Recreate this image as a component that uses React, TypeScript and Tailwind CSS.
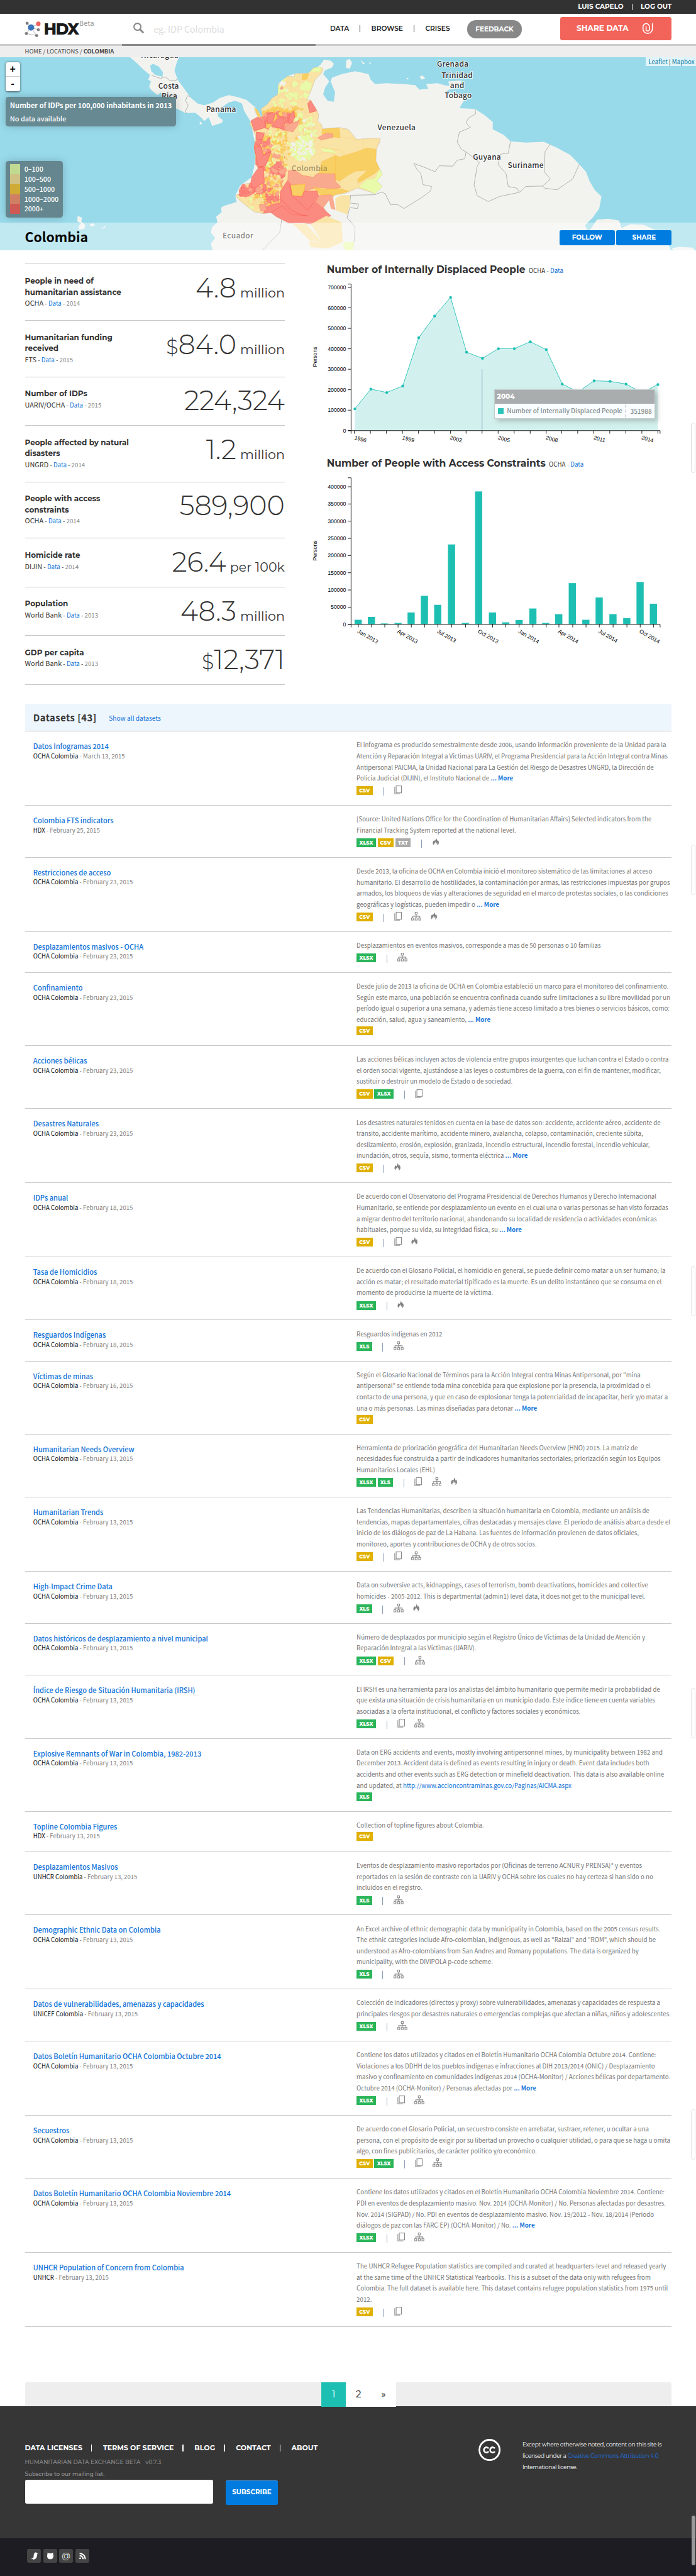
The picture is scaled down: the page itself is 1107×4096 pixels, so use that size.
import type { ReactNode } from 'react';

type Row = { t: string; o?: string; d: string; l: string[]; more?: boolean; link?: string; f: string[]; i?: string };

const ROWS: Row[] = [
  { t: 'Datos Infogramas 2014', d: 'March 13, 2015', l: ['El infograma es producido semestralmente desde 2006, usando información proveniente de la Unidad para la', 'Atención y Reparación Integral a Victimas UARIV, el Programa Presidencial para la Acción Integral contra Minas', 'Antipersonal PAICMA, la Unidad Nacional para La Gestión del Riesgo de Desastres UNGRD, la Dirección de', 'Policía Judicial (DIJIN), el Instituto Nacional de'], more: true, f: ['CSV'], i: 'c' },
  { t: 'Colombia FTS indicators', o: 'HDX', d: 'February 25, 2015', l: ['[Source: United Nations Office for the Coordination of Humanitarian Affairs] Selected indicators from the', 'Financial Tracking System reported at the national level.'], f: ['XLSX', 'CSV', 'TXT'], i: 'f' },
  { t: 'Restricciones de acceso', d: 'February 23, 2015', l: ['Desde 2013, la oficina de OCHA en Colombia inició el monitoreo sistemático de las limitaciones al acceso', 'humanitario. El desarrollo de hostilidades, la contaminación por armas, las restricciones impuestas por grupos', 'armados, los bloqueos de vías y alteraciones de seguridad en el marco de protestas sociales, o las condiciones', 'geográficas y logísticas, pueden impedir o'], more: true, f: ['CSV'], i: 'cof' },
  { t: 'Desplazamientos masivos - OCHA', d: 'February 23, 2015', l: ['Desplazamientos en eventos masivos, corresponde a mas de 50 personas o 10 familias'], f: ['XLSX'], i: 'o' },
  { t: 'Confinamiento', d: 'February 23, 2015', l: ['Desde julio de 2013 la oficina de OCHA en Colombia estableció un marco para el monitoreo del confinamiento.', 'Según este marco, una población se encuentra confinada cuando sufre limitaciones a su libre movilidad por un', 'período igual o superior a una semana, y además tiene acceso limitado a tres bienes o servicios básicos, como:', 'educación, salud, agua y saneamiento,'], more: true, f: ['CSV'] },
  { t: 'Acciones bélicas', d: 'February 23, 2015', l: ['Las acciones bélicas incluyen actos de violencia entre grupos insurgentes que luchan contra el Estado o contra', 'el orden social vigente, ajustándose a las leyes o costumbres de la guerra, con el fin de mantener, modificar,', 'sustituir o destruir un modelo de Estado o de sociedad.'], f: ['CSV', 'XLSX'], i: 'c' },
  { t: 'Desastres Naturales', d: 'February 23, 2015', l: ['Los desastres naturales tenidos en cuenta en la base de datos son: accidente, accidente aéreo, accidente de', 'transito, accidente marítimo, accidente minero, avalancha, colapso, contaminación, creciente súbita,', 'deslizamiento, erosión, explosión, granizada, incendio estructural, incendio forestal, incendio vehicular,', 'inundación, otros, sequía, sismo, tormenta eléctrica'], more: true, f: ['CSV'], i: 'f' },
  { t: 'IDPs anual', d: 'February 18, 2015', l: ['De acuerdo con el Observatorio del Programa Presidencial de Derechos Humanos y Derecho Internacional', 'Humanitario, se entiende por desplazamiento un evento en el cual una o varias personas se han visto forzadas', 'a migrar dentro del territorio nacional, abandonando su localidad de residencia o actividades económicas', 'habituales, porque su vida, su integridad física, su'], more: true, f: ['CSV'], i: 'cf' },
  { t: 'Tasa de Homicidios', d: 'February 18, 2015', l: ['De acuerdo con el Glosario Policial, el homicidio en general, se puede definir como matar a un ser humano; la', 'acción es matar; el resultado material tipificado es la muerte. Es un delito instantáneo que se consuma en el', 'momento de producirse la muerte de la víctima.'], f: ['XLSX'], i: 'f' },
  { t: 'Resguardos Indígenas', d: 'February 18, 2015', l: ['Resguardos indígenas en 2012'], f: ['XLS'], i: 'o' },
  { t: 'Víctimas de minas', d: 'February 16, 2015', l: ['Según el Glosario Nacional de Términos para la Acción Integral contra Minas Antipersonal, por "mina', 'antipersonal" se entiende toda mina concebida para que explosione por la presencia, la proximidad o el', 'contacto de una persona, y que en caso de explosionar tenga la potencialidad de incapacitar, herir y/o matar a', 'una o más personas. Las minas diseñadas para detonar'], more: true, f: ['CSV'] },
  { t: 'Humanitarian Needs Overview', d: 'February 13, 2015', l: ['Herramienta de priorización geográfica del Humanitarian Needs Overview (HNO) 2015. La matriz de', 'necesidades fue construida a partir de indicadores humanitarios sectoriales; priorización según los Equipos', 'Humanitarios Locales (EHL)'], f: ['XLSX', 'XLS'], i: 'cof' },
  { t: 'Humanitarian Trends', d: 'February 13, 2015', l: ['Las Tendencias Humanitarias, describen la situación humanitaria en Colombia, mediante un análisis de', 'tendencias, mapas departamentales, cifras destacadas y mensajes clave. El periodo de análisis abarca desde el', 'inicio de los diálogos de paz de La Habana. Las fuentes de información provienen de datos oficiales,', 'monitoreo, aportes y contribuciones de OCHA y de otros socios.'], f: ['CSV'], i: 'co' },
  { t: 'High-Impact Crime Data', d: 'February 13, 2015', l: ['Data on subversive acts, kidnappings, cases of terrorism, bomb deactivations, homicides and collective', 'homicides - 2005-2012. This is departmental (admin1) level data, it does not get to the municipal level.'], f: ['XLS'], i: 'of' },
  { t: 'Datos históricos de desplazamiento a nivel municipal', d: 'February 13, 2015', l: ['Número de desplazados por municipio según el Registro Único de Víctimas de la Unidad de Atención y', 'Reparación Integral a las Víctimas (UARIV).'], f: ['XLSX', 'CSV'], i: 'o' },
  { t: 'Índice de Riesgo de Situación Humanitaria (IRSH)', d: 'February 13, 2015', l: ['El IRSH es una herramienta para los analistas del ámbito humanitario que permite medir la probabilidad de', 'que exista una situación de crisis humanitaria en un municipio dado. Este índice tiene en cuenta variables', 'asociadas a la oferta institucional, el conflicto y factores sociales y económicos.'], f: ['XLSX'], i: 'co' },
  { t: 'Explosive Remnants of War in Colombia, 1982-2013', d: 'February 13, 2015', l: ['Data on ERG accidents and events, mostly involving antipersonnel mines, by municipality between 1982 and', 'December 2013. Accident data is defined as events resulting in injury or death. Event data includes both', 'accidents and other events such as ERG detection or minefield deactivation. This data is also available online', 'and updated, at'], link: 'http://www.accioncontraminas.gov.co/Paginas/AICMA.aspx', f: ['XLS'] },
  { t: 'Topline Colombia Figures', o: 'HDX', d: 'February 13, 2015', l: ['Collection of topline figures about Colombia.'], f: ['CSV'] },
  { t: 'Desplazamientos Masivos', o: 'UNHCR Colombia', d: 'February 13, 2015', l: ['Eventos de desplazamiento masivo reportados por (Oficinas de terreno ACNUR y PRENSA)* y eventos', 'reportados en la sesión de contraste con la UARIV y OCHA sobre los cuales no hay certeza si han sido o no', 'incluidos en el registro.'], f: ['XLS'], i: 'o' },
  { t: 'Demographic Ethnic Data on Colombia', d: 'February 13, 2015', l: ['An Excel archive of ethnic demographic data by municipality in Colombia, based on the 2005 census results.', 'The ethnic categories include Afro-colombian, indigenous, as well as "Raizal" and "ROM", which should be', 'understood as Afro-colombians from San Andres and Romany populations. The data is organized by', 'municipality, with the DIVIPOLA p-code scheme.'], f: ['XLS'], i: 'o' },
  { t: 'Datos de vulnerabilidades, amenazas y capacidades', o: 'UNICEF Colombia', d: 'February 13, 2015', l: ['Colección de indicadores (directos y proxy) sobre vulnerabilidades, amenazas y capacidades de respuesta a', 'principales riesgos por desastres naturales o emergencias complejas que afectan a niñas, niños y adolescentes.'], f: ['XLSX'], i: 'o' },
  { t: 'Datos Boletín Humanitario OCHA Colombia Octubre 2014', d: 'February 13, 2015', l: ['Contiene los datos utilizados y citados en el Boletín Humanitario OCHA Colombia Octubre 2014. Contiene:', 'Violaciones a los DDHH de los pueblos indígenas e infracciones al DIH 2013/2014 (ONIC) / Desplazamiento', 'masivo y confinamiento en comunidades indígenas 2014 (OCHA-Monitor) / Acciones bélicas por departamento.', 'Octubre 2014 (OCHA-Monitor) / Personas afectadas por'], more: true, f: ['XLSX'], i: 'co' },
  { t: 'Secuestros', d: 'February 13, 2015', l: ['De acuerdo con el Glosario Policial, un secuestro consiste en arrebatar, sustraer, retener, u ocultar a una', 'persona, con el propósito de exigir por su libertad un provecho o cualquier utilidad, o para que se haga u omita', 'algo, con fines publicitarios, de carácter político y/o económico.'], f: ['CSV', 'XLSX'], i: 'co' },
  { t: 'Datos Boletín Humanitario OCHA Colombia Noviembre 2014', d: 'February 13, 2015', l: ['Contiene los datos utilizados y citados en el Boletín Humanitario OCHA Colombia Noviembre 2014. Contiene:', 'PDI en eventos de desplazamiento masivo. Nov. 2014 (OCHA-Monitor) / No. Personas afectadas por desastres.', 'Nov. 2014 (SIGPAD) / No. PDI en eventos de desplazamiento masivo. Nov. 19/2012 - Nov. 18/2014 (Periodo', 'diálogos de paz con las FARC-EP) (OCHA-Monitor) / No.'], more: true, f: ['XLSX'], i: 'co' },
  { t: 'UNHCR Population of Concern from Colombia', o: 'UNHCR', d: 'February 13, 2015', l: ['The UNHCR Refugee Population statistics are compiled and curated at headquarters-level and released yearly', 'at the same time of the UNHCR Statistical Yearbooks. This is a subset of the data only with refugees from', 'Colombia. The full dataset is available here. This dataset contains refugee population statistics from 1975 until', '2012.'], f: ['CSV'], i: 'c' },
];

const TAG: Record<string, string> = {
  CSV: 'w-[29px] bg-[#e0b000]',
  XLSX: 'w-[35px] bg-[#2bb55b]',
  XLS: 'w-[28px] bg-[#2bb55b]',
  TXT: 'w-[28px] bg-[#aaaaaa]',
};

function CopyIcon() {
  return (
    <svg width="14" height="16" viewBox="0 0 14 16" fill="none" stroke="#888">
      <rect x="3.5" y="0.7" width="9.6" height="12.6" strokeWidth="1.2" />
      <path d="M0.9 2.6V15H10.6" strokeWidth="1.3" stroke="#999" />
    </svg>
  );
}
function OrgIcon() {
  return (
    <svg width="18" height="16" viewBox="0 0 18 16" fill="none" stroke="#888" strokeWidth="1.2">
      <rect x="7.1" y="0.6" width="3.8" height="3.6" />
      <path d="M9 4.2V11M2.5 11V7.8H15.5V11" />
      <rect x="0.7" y="11" width="3.6" height="3.8" />
      <rect x="7.1" y="11" width="3.8" height="3.8" />
      <rect x="13.7" y="11" width="3.6" height="3.8" />
    </svg>
  );
}
function FlameIcon() {
  return (
    <svg width="12" height="15" viewBox="0 0 12 15" fill="#808080">
      <path d="M5.6 0.6c1 2-.2 3.6-1.8 5.6C3.2 5.8 3 5.2 2.9 4.4 1.3 6 0.4 8 0.5 9.8c.1 1.7.9 3 2.2 4-.5-1.6-.1-2.7 1.1-4.3.3.6.7.9 1.1 1 .2-1.6.1-2.7-.3-3.7 1.7.9 2.5 2.4 2.5 4.3.6-.4.9-1.1 1-1.9.8 1.4.8 3-.1 4.6C10.2 12.9 11.4 11.1 11.3 8.9c-.1-2-.9-3.500-1.500-5.100-.2 1.200-.6 1.900-1.300 2.500C8.4 3.9 7.600 1.900 5.600 0.600z" />
    </svg>
  );
}

const ICON: Record<string, () => ReactNode> = { c: CopyIcon, o: OrgIcon, f: FlameIcon };

function DatasetRow({ r }: { r: Row }) {
  return (
    <div className="flex border-b border-[#c8c8c8] pb-[18px] pt-[15px]">
      <div className="w-[600px] shrink-0 pl-[15px] pt-[2px]">
        <div className="h-[19px] text-[12.56px] font-medium leading-[20px] text-[#1173d8]">{r.t}</div>
        <div className="h-[18px] text-[10.95px] leading-[18px] text-[#808080]">
          <span className="text-[#111]">{r.o ?? 'OCHA Colombia'}</span> - {r.d}
        </div>
      </div>
      <div>
        <div className="whitespace-nowrap text-[11.06px] leading-[20px] text-[#757575]">
          {r.l.map((x, k) => (
            <div key={x} className="h-[20px]">
              {x}
              {k === r.l.length - 1 && r.more && <span className="font-bold text-[#1173d8]"> ... More</span>}
              {k === r.l.length - 1 && r.link && <span className="text-[#1173d8]"> {r.link}</span>}
            </div>
          ))}
        </div>
        <div className={r.i ? 'mt-[4px] flex h-[16px]' : 'mt-[2px] flex h-[16px]'}>
          <div className="flex gap-[3px]">
            {r.f.map((x) => (
              <span key={x} className={`${TAG[x]} block h-[16px] text-center font-['Montserrat','Inter',sans-serif] text-[9.2px] font-extrabold leading-[16px] text-white`}>{x}</span>
            ))}
          </div>
          {r.i && (
            <>
              <span className="ml-[19px] mr-[19px] mt-[2px] h-[15px] w-px bg-[#8d9fb8]" />
              <div className="-mt-px flex gap-[17px]">
                {r.i.split('').map((x) => {
                  const I = ICON[x];
                  return <I key={x} />;
                })}
              </div>
            </>
          )}
        </div>
      </div>
    </div>
  );
}

const STATS: { l: string[]; s: string; y: string; n: string; u?: string; p?: boolean }[] = [
  { l: ['People in need of', 'humanitarian assistance'], s: 'OCHA', y: '2014', n: '4.8', u: 'million' },
  { l: ['Humanitarian funding', 'received'], s: 'FTS', y: '2015', n: '84.0', u: 'million', p: true },
  { l: ['Number of IDPs'], s: 'UARIV/OCHA', y: '2015', n: '224,324' },
  { l: ['People affected by natural', 'disasters'], s: 'UNGRD', y: '2014', n: '1.2', u: 'million' },
  { l: ['People with access', 'constraints'], s: 'OCHA', y: '2014', n: '589,900' },
  { l: ['Homicide rate'], s: 'DIJIN', y: '2014', n: '26.4', u: 'per 100k' },
  { l: ['Population'], s: 'World Bank', y: '2013', n: '48.3', u: 'million' },
  { l: ['GDP per capita'], s: 'World Bank', y: '2013', n: '12,371', p: true },
];

function Stats() {
  return (
    <div className="w-[470px] shrink-0 border-t border-[#c8c8c8]">
      {STATS.map((s) => (
        <div key={s.n} className={`flex justify-between border-b border-[#c8c8c8] pt-[20px] ${s.l.length > 1 ? 'h-[102px]' : 'h-[88px]'}`}>
          <div className="text-[#333]">
            {s.l.map((x) => (
              <div key={x} className="whitespace-nowrap font-['Montserrat','Inter',sans-serif] text-[13.6px] font-bold leading-[20px]">{x}</div>
            ))}
            <div className="text-[11.06px] leading-[20px]">
              <span className="text-[12.4px]">{s.s}</span> - <span className="text-[#1173d8]">Data</span> - <span className="text-[#888]">{s.y}</span>
            </div>
          </div>
          <div className="-mt-px flex items-baseline whitespace-nowrap font-['Montserrat','Inter',sans-serif] font-light text-[#333]">
            {s.p && <span className="text-[36px] leading-[48px]">$</span>}
            <span className="text-[48.8px] leading-[48px]">{s.n}</span>
            {s.u && <span className="ml-[7px] text-[23.4px] font-normal leading-[48px]">{s.u}</span>}
          </div>
        </div>
      ))}
    </div>
  );
}

const IDP = [549, 479, 491, 468, 297, 220, 154, 348, 370, 335.5, 335.5, 311, 339, 461, 489, 449.5, 451.5, 461, 492, 463];
const BX = [198, 252, 304, 360, 413, 467, 521, 577, 633, 687, 743, 797, 851, 907, 959, 1012, 1067, 1122, 1176, 1232, 1288, 1342, 1396];
const BY = [1298, 1288, 1311, 1309, 1272, 1213, 1245, 1031, 1309, 843, 1272, 1307, 1299, 1258, 1309, 1278, 1168, 1298, 1219, 1278, 1292, 1164, 1241];
const MONTHS: [number, string][] = [[0, 'Jan 2013'], [3, 'Apr 2013'], [6, 'Jul 2013'], [9, 'Oct 2013'], [12, 'Jan 2014'], [15, 'Apr 2014'], [18, 'Jul 2014'], [21, 'Oct 2014']];

function ChartTitle({ children }: { children: string }) {
  return (
    <div className="flex h-[24px] items-baseline whitespace-nowrap">
      <span className="font-['Montserrat','Inter',sans-serif] text-[17.74px] font-bold leading-[24px] text-[#333]">{children}</span>
      <span className="ml-[6px] text-[11.06px] text-[#888]"><span className="text-[#333]">OCHA</span> - <span className="text-[#1173d8]">Data</span></span>
    </div>
  );
}

function Charts() {
  const pts = IDP.map((y, i) => [82.4 + i * 28.85, y / 1.96 - 40] as const);
  const line = pts.map((p) => p.join(',')).join(' ');
  const bx = (x: number) => x / 2.243;
  const by = (y: number) => y / 1.96 - 391;
  return (
    <div className="relative w-[660px] shrink-0">
      <div className="pl-[31px]"><ChartTitle>Number of Internally Displaced People</ChartTitle></div>
      <svg className="block" width="660" height="311" viewBox="0 0 660 311" fontFamily="Liberation Sans, sans-serif" fontSize="10">
        <polygon points={`82.4,279.4 ${line} 630.5,279.4`} fill="#d2f1ee" />
        <polyline points={line} fill="none" stroke="#1ebfb3" strokeWidth="1" />
        {pts.map((p, i) => <circle key={i} cx={p[0]} cy={p[1]} r="2.5" fill="#1ebfb3" />)}
        <path d="M312.5 168.5V279" stroke="#8ab" strokeWidth="1" />
        <path d="M69.5 14.5H75.5V279.5H634.5V285M69.5 279.5H75.5V285" fill="none" stroke="#000" />
        {[0, 1, 2, 3, 4, 5, 6, 7].map((k) => (
          <g key={k}>
            <path d={`M69.5 ${279.5 - k * 37}h6`} stroke="#000" />
            <text x="66.5" y={283 - k * 37} textAnchor="end">{k * 100000}</text>
          </g>
        ))}
        {pts.map((p, i) => <path key={i} d={`M${Math.round(p[0]) - 0.5} 279.5v5.5`} stroke="#000" />)}
        {[0, 3, 6, 9, 12, 15, 18].map((k) => (
          <text key={k} transform={`translate(${pts[k][0] - 1.5} 295) rotate(15)`}>{1996 + k}</text>
        ))}
        <text transform="translate(14 146) rotate(-90)" textAnchor="middle">Persons</text>
      </svg>
      <div className="absolute left-[334px] top-[229px] h-[53px] w-[291px] border border-[#c4cccc] bg-[#f9fdff] shadow-[5px_5px_8px_rgba(119,119,119,0.4)]">
        <div className="h-[25px] bg-[#aaadae] pl-[4px] font-['Montserrat','Inter',sans-serif] text-[12px] font-extrabold leading-[25px] text-white">2004</div>
        <div className="flex h-[26px] items-center text-[11.4px] text-[#868c8c]">
          <span className="ml-[6px] mr-[6px] h-[10px] w-[10px] bg-[#2cc3b7]" />
          <span className="w-[216px] whitespace-nowrap border-r border-dotted border-[#888] font-medium leading-[26px]">Number of Internally Displaced People</span>
          <span className="ml-[7px] font-medium">351988</span>
        </div>
      </div>
      <div className="mt-[16px] pl-[31px]"><ChartTitle>Number of People with Access Constraints</ChartTitle></div>
      <svg className="block" width="660" height="330" viewBox="0 0 660 330" fontFamily="Liberation Sans, sans-serif" fontSize="10">
        {BX.map((x, i) => (
          <g key={x}>
            <rect x={bx(x) - 6.5} y={by(BY[i])} width="13" height={279.5 - by(BY[i])} fill="#1ebfb3" />
            <path d={`M${Math.round(bx(x)) + 0.5} 279.5v5.5`} stroke="#000" />
          </g>
        ))}
        <path d="M69.5 14.5H75.5V279.5H634.5V285M69.5 279.5H75.5V285" fill="none" stroke="#000" />
        {[0, 1, 2, 3, 4, 5, 6, 7, 8].map((k) => (
          <g key={k}>
            <path d={`M69.5 ${279.5 - k * 31.1}h6`} stroke="#000" />
            <text x="66.5" y={283 - k * 31.1} textAnchor="end">{k * 50000}</text>
          </g>
        ))}
        {MONTHS.map(([k, m]) => (
          <text key={m} transform={`translate(${bx(BX[k]) - 2} 294) rotate(30)`}>{m}</text>
        ))}
        <text transform="translate(14 146) rotate(-90)" textAnchor="middle">Persons</text>
      </svg>
    </div>
  );
}

const COLOMBIA = 'M537,92L500,97 475,125 400,128 398,145 360,143 325,170 310,190 308,240 275,262 250,295 217,318 225,360 210,360 195,325 180,312 190,345 200,362 165,380 155,400 175,435 188,470 178,525 187,575 187,620 200,640 165,690 160,722 115,728 97,760 100,780 77,790 100,815 130,840 180,878 230,888 270,882 300,905 370,940 440,938 525,950 550,915 597,900 570,875 555,855 585,815 620,785 680,775 740,748 810,770 835,780 875,740 845,710 875,675 858,640 840,600 842,540 860,500 862,480 800,480 735,485 690,430 640,420 550,428 545,405 525,385 530,350 510,310 485,270 465,272 490,215 510,160 545,125 553,103Z';
const C = { y: '#f9e3a5', o: '#f8cf63', s: '#f9a98d', r: '#fb8a80', g: '#e9fbab', w: '#f2f3ef' };
const EDGE: Record<string, string> = { [C.y]: '#fbd58a', [C.o]: '#fbbb33', [C.s]: '#fb8d70', [C.r]: '#fa5a50', [C.g]: '#e4fa9a', [C.w]: '#f2f3ef' };

/* Zones of small municipalities: centre, radii, count, cell size, colours. */
const ZONES: [number, number, number, number, number, number, string[]][] = [
  [390, 210, 90, 80, 60, 15, [C.y, C.y, C.y, C.g, C.y]],
  [340, 190, 28, 35, 22, 9, [C.g, C.w, C.y, C.s]],
  [390, 255, 40, 26, 26, 9, [C.g, C.g, C.y]],
  [315, 285, 30, 22, 22, 9, [C.g, C.g, C.y]],
  [340, 340, 110, 28, 55, 14, [C.o, C.y, C.o]],
  [320, 385, 105, 45, 80, 17, [C.r, C.s, C.r, C.s, C.r, C.o]],
  [450, 400, 50, 90, 60, 14, [C.y, C.o, C.y, C.g]],
  [300, 480, 75, 50, 80, 10, [C.y, C.o, C.y, C.g]],
  [350, 530, 90, 70, 140, 9, [C.y, C.g, C.y, C.o]],
  [470, 480, 50, 110, 150, 9, [C.g, C.w, C.y, C.g]],
  [440, 540, 65, 60, 130, 8, [C.w, C.g, C.g, C.w]],
  [225, 560, 45, 90, 70, 17, [C.r, C.s, C.r, C.r, C.o]],
  [300, 620, 60, 60, 80, 12, [C.y, C.o, C.r, C.s, C.g]],
  [310, 660, 34, 40, 20, 18, [C.r, C.s]],
  [280, 730, 55, 50, 80, 11, [C.o, C.o, C.y, C.s]],
  [170, 760, 80, 40, 70, 13, [C.r, C.s, C.r, C.r]],
  [195, 820, 50, 40, 60, 10, [C.y, C.g, C.o, C.y]],
  [270, 800, 45, 45, 40, 14, [C.r, C.s, C.r, C.o]],
];

function cells() {
  let seed = 7;
  const rnd = () => ((seed = (seed * 16807) % 2147483647) / 2147483647);
  const out: { d: string; f: string }[] = [];
  for (const [cx, cy, rx, ry, n, size, cols] of ZONES) {
    for (let i = 0; i < n; i++) {
      const a = rnd() * 6.283;
      const q = Math.sqrt(rnd());
      const x = cx + Math.cos(a) * rx * q;
      const y = cy + Math.sin(a) * ry * q;
      const p: string[] = [];
      for (let k = 0; k < 6; k++) {
        const s = size * (0.5 + rnd() * 0.8);
        p.push(`${(x + Math.cos(k * 1.047) * s).toFixed(1)},${(y + Math.sin(k * 1.047) * s).toFixed(1)}`);
      }
      out.push({ d: `M${p.join('L')}Z`, f: cols[Math.floor(rnd() * cols.length)] });
    }
  }
  return out;
}
const CELLS = cells();

const REGIONS: [string, string][] = [
  [C.o, 'M545,605L618,572 640,580 735,552 790,530 842,538 840,605 860,645 835,668 735,725 745,690 790,655 730,658 690,680 640,712 618,700 618,670 528,675Z'],
  [C.y, 'M640,715L690,680 730,658 790,655 740,700 745,745 680,772 650,745Z'],
  [C.g, 'M860,650L875,675 845,710 875,742 835,780 810,765 750,742 790,705 835,698Z'],
  [C.y, 'M560,480L640,470 735,485 862,480 842,538 790,530 735,552 640,580 560,530 520,520Z'],
  [C.o, 'M550,428L640,425 645,475 600,470 590,450 548,455Z'],
  [C.s, 'M525,475L570,450 605,455 605,475 540,488Z'],
  [C.y, 'M440,600L530,560 600,555 618,572 545,605 528,675 440,680 430,640Z'],
  [C.s, 'M365,655L400,650 440,680 500,690 520,670 618,672 620,710 650,745 610,755 530,745 450,765 440,735 360,730Z'],
  [C.o, 'M365,735L455,728 450,765 440,795 380,790Z'],
  [C.o, 'M500,745L560,755 640,752 690,765 610,790 540,785 520,765Z'],
];
const FRONT: [string, string][] = [
  [C.r, 'M360,708L375,725 385,790 440,795 450,765 520,765 532,800 510,825 555,855 597,900 550,915 525,950 440,938 370,940 300,905 270,882 230,885 240,850 320,830 320,770Z'],
  [C.s, 'M530,790L590,785 605,790 583,830 555,858 512,825Z'],
  [C.r, 'M160,380L200,362 240,395 240,420 180,440Z'],
  [C.r, 'M250,345L295,340 280,395 250,400Z'],
  [C.r, 'M300,375L335,362 345,395 325,425 275,412Z'],
  [C.r, 'M362,395L375,350 395,328 400,365 385,395Z'],
  [C.s, 'M345,408L380,398 425,380 415,408 390,445 345,435Z'],
  [C.r, 'M470,290L487,272 510,300 520,330 480,340Z'],
  [C.r, 'M182,530L215,520 230,570 272,550 240,630 200,632Z'],
  [C.r, 'M200,635L230,640 235,720 175,750 160,722 165,690Z'],
  [C.r, 'M190,445L235,450 225,485 190,485Z'],
  [C.s, 'M205,838L240,835 245,870 215,875Z'],
  [C.g, 'M540,535L590,535 625,558 560,552Z'],
  [C.g, 'M430,200L460,165 495,185 450,225Z'],
  [C.o, 'M440,135L475,128 465,158 442,160Z'],
  [C.g, 'M485,118L510,95 540,95 538,115Z'],
];

const LAND = 'M293,309L310,345 325,380 338,405 334,430 340,440 336,470 342,490 355,515 362,500 368,530 385,560 395,585 410,602 418,612 440,610 455,640 460,655 470,635 478,682 500,665 502,650 492,632 490,610 500,580 515,555 530,545 545,560 550,600 560,640 565,660 577,810 573,900 567,960 541,1005 530,1060 533,1095 505,1115 498,1125 499,1150 487,1175 490,1205 478,1230 475,1260 485,1290 475,1320 480,1362 1513,1362 1500,1300 1480,1250 1450,1218 1420,1215 1400,1235 1395,1195 1370,1185 1345,1190 1325,1260 1318,1220 1335,1180 1350,1130 1355,1065 1340,1030 1328,980 1320,930 1305,890 1285,840 1255,800 1225,768 1185,772 1150,765 1135,730 1110,700 1110,660 1090,620 1070,590 1035,585 1045,545 1035,510 1005,495 1022,470 1000,460 985,450 960,455 965,480 945,485 935,460 910,455 870,450 845,455 835,430 830,400 800,385 770,400 748,420 745,440 755,500 752,550 738,545 728,510 733,470 742,440 735,420 728,400 732,380 748,365 752,345 745,328 730,322 722,350 710,370 690,400 668,395 650,410 628,450 627,520 610,540 592,600 590,635 575,580 555,540 535,525 515,515 495,530 480,555 460,570 445,560 430,530 415,480 400,430 393,380 398,340 403,309Z';

function MapLabel({ x, y, children }: { x: number; y: number; children: string }) {
  return <text x={x} y={y} textAnchor="middle" fontSize="13.6" fontWeight="500" fill="#333" stroke="#fff" strokeWidth="2.5" strokeOpacity="0.8" paintOrder="stroke" letterSpacing="0.3">{children}</text>;
}

function MapPanel() {
  return (
    <div className="relative h-[350px] overflow-hidden bg-[#98daea]">
      <svg className="block" width="1259" height="350" viewBox="0 103 1259 350">
        <g transform="scale(0.80295 0.33333)">
          <path d={LAND} fill="#f2f3ef" />
          <path d="M338,355L345,345 358,360 367,390 366,415 350,405 341,385Z" fill="#98daea" />
          <g fill="#f2f3ef">
            <path d="M780,325L788,318 793,340 788,372 779,365ZM812,320L822,345 818,348ZM832,330L836,345 833,350ZM1010,440L1040,435 1035,470 1015,485ZM945,415L952,408 958,425 950,430ZM915,425L918,420 921,425 918,430ZM450,655L456,670 450,675Z" />
            <path d="M175,1170L185,1180 183,1200 192,1220 190,1240 178,1245 177,1225 183,1210 174,1200ZM202,1215L210,1210 214,1222 205,1228ZM228,1240L238,1222 236,1235Z" />
            <path d="M1513,1345L1530,1338 1560,1342 1568,1362 1520,1362Z" />
          </g>
          <g fill="none" stroke="#a9a9a6" strokeWidth="1">
            <path vectorEffect="non-scaling-stroke" d="M342,408L362,424 372,415 382,435 396,438 398,428M420,615L418,600 424,570 418,545 422,518 428,522" />
            <path vectorEffect="non-scaling-stroke" d="M1070,590L1072,615 1055,640 1050,665 1060,690 1035,715 1030,770 1040,810 1050,822 1047,860 1030,868 1020,900 990,898 980,930 955,905 932,885 940,920 948,940 953,1000 972,1010 970,1035 950,1070 930,1100 910,1130 895,1108 880,1110 868,1050 860,1040 845,1055 790,1058 788,1100 808,1105 805,1130 788,1125 782,1180 800,1230 798,1300 794,1359" />
            <path vectorEffect="non-scaling-stroke" d="M1150,765L1145,830 1128,835 1122,890 1140,940 1145,1010 1165,1020 1170,1042 1125,1065 1100,1092 1075,1060 1068,1000 1075,900 1080,880 1050,822M1170,1042L1185,1010 1222,1008 1228,1020 1255,1028 1290,970 1305,890M1240,780L1228,820 1226,930 1240,970 1222,1008M635,1185L630,1260 590,1359" />
          </g>
        </g>
        <g transform="translate(400 90) scale(0.33333)">
          <defs><clipPath id="co"><path d={COLOMBIA} /></clipPath></defs>
          <path d={COLOMBIA} fill={C.y} stroke="#c8bfa0" strokeWidth="2" />
          <g clipPath="url(#co)">
            {REGIONS.map(([f, d]) => <path key={d} d={d} fill={f} stroke={EDGE[f]} strokeWidth="2" />)}
            {CELLS.map((c, i) => <path key={i} d={c.d} fill={c.f} stroke={EDGE[c.f]} strokeWidth="1.2" />)}
            {FRONT.map(([f, d]) => <path key={d} d={d} fill={f} stroke={EDGE[f]} strokeWidth="2" />)}
          </g>
          <path d="M370,730L385,790 470,870 500,830M270,882L330,845 380,890 470,900M320,800L380,870 440,895 475,900" fill="none" stroke="#fa5a50" strokeWidth="2" />
          <path d="M620,572V710M560,535L640,540 690,575M770,485V535" fill="none" stroke="#fbbb33" strokeWidth="1.5" strokeOpacity="0.7" />
          <path d="M583,795L605,790 620,868 595,860Z" fill={C.s} />
          <path d="M620,805L650,788 700,788 700,835 685,892 622,868Z" fill={C.y} />
          <path d="M180,312L198,325 215,360 200,362Z" fill={C.o} />
        </g>
        <g transform="scale(0.80295 0.33333)">
          <path d="M660,1212L690,1212 726,1312 698,1305Z" fill={C.y} />
          <path d="M700,1215L735,1170 770,1205 772,1312 740,1345 700,1340 696,1310 726,1312Z" fill={C.y} />
          <path d="M776,1312H798L795,1359H780L772,1330Z" fill={C.g} />
        </g>
        <g fontFamily="Noto Sans CJK SC, sans-serif">
          <MapLabel x={289} y={104}>Nicaragua</MapLabel>
          <MapLabel x={305} y={160}>Costa</MapLabel>
          <MapLabel x={306.5} y={178.5}>Rica</MapLabel>
          <MapLabel x={400} y={202.5}>Panama</MapLabel>
          <MapLabel x={717.5} y={235.5}>Venezuela</MapLabel>
          <MapLabel x={881} y={288.5}>Guyana</MapLabel>
          <MapLabel x={951} y={303.5}>Suriname</MapLabel>
          <MapLabel x={819} y={120.5}>Grenada</MapLabel>
          <MapLabel x={827} y={140}>Trinidad</MapLabel>
          <MapLabel x={827} y={158.5}>and</MapLabel>
          <MapLabel x={829} y={177}>Tobago</MapLabel>
          <MapLabel x={430.5} y={430.5}>Ecuador</MapLabel>
          <text x="560" y="309" textAnchor="middle" fontSize="13.6" fontWeight="500" fill="#6b6248" fillOpacity="0.6" letterSpacing="0.3">Colombia</text>
        </g>
      </svg>

      <div className="absolute left-[10px] top-[10px] h-[52px] w-[26px] rounded-[4px] bg-white text-center font-['Liberation_Sans',sans-serif] text-[18px] font-bold text-black shadow-[0_1px_4px_rgba(0,0,0,0.65)]">
        <div className="h-[26px] border-b border-[#ccc] leading-[26px]">+</div>
        <div className="leading-[24px]">-</div>
      </div>
      <div className="absolute left-[10px] top-[72px] h-[54px] w-[309px] rounded-[5px] bg-[#65868e]/97 pl-[8px] pt-[4px] text-white shadow-[0_0_15px_rgba(0,0,0,0.2)]">
        <div className="whitespace-nowrap text-[12.59px] font-bold leading-[24px]">Number of IDPs per 100,000 inhabitants in 2013</div>
        <div className="text-[12.35px] font-medium leading-[24px]">No data available</div>
      </div>
      <div className="absolute left-[10px] top-[188px] h-[102px] w-[104px] rounded-[5px] bg-[#65868e] pl-[8px] pt-[6px] text-[12.16px] font-medium text-white shadow-[0_0_15px_rgba(0,0,0,0.2)]">
        {[['bg-[#c0da92]', '0–100'], ['bg-[#cfc284]', '100–500'], ['bg-[#cfab36]', '500–1000'], ['bg-[#cf7f64]', '1000–2000'], ['bg-[#cf5955]', '2000+']].map(([c, t]) => (
          <div key={t} className="flex h-[18px] items-center">
            <span className={`${c} mr-[8px] h-[18px] w-[18px]`} />
            <span className="leading-[18px]">{t}</span>
          </div>
        ))}
      </div>
      <div className="absolute right-0 top-0 h-[16px] w-[91px] whitespace-nowrap bg-white/70 pl-[5px] text-[11px] leading-[16px] text-[#333]">
        <span className="text-[#0078a8]">Leaflet</span> | <span className="text-[#0078a8]">Mapbox</span>
      </div>
      <div className="absolute bottom-0 left-0 flex h-[50px] w-full items-center bg-white/40 pl-[45px] pr-[44px]">
        <h1 className="flex-1 text-[24.18px] font-bold leading-[48px] text-black">Colombia</h1>
        <div className="mt-[4px] flex gap-[3px] text-center font-['Montserrat','Inter',sans-serif] text-[11.8px] font-bold leading-[27px] text-white">
          <span className="h-[28px] w-[100px] rounded-[3px] bg-[#007ce0]">FOLLOW</span>
          <span className="h-[28px] w-[100px] rounded-[3px] bg-[#007ce0]">SHARE</span>
        </div>
      </div>
    </div>
  );
}

function Header() {
  return (
    <header>
      <div className="flex h-[25px] items-center justify-end bg-[#323232] pr-[44px] font-['Montserrat','Inter',sans-serif] text-[11.9px] font-bold leading-[25px] text-white">
        <span>LUIS CAPELO</span><span className="mx-[15px] h-[12px] w-px bg-white" /><span>LOG OUT</span>
      </div>
      <div className="flex h-[55px] bg-white pl-[44px] pr-[44px]">
        <div className="flex w-[190px]">
          <svg className="mt-[11px] shrink-0" width="31" height="32" viewBox="44 36 31 32">
            <path d="M48.7 41.7L55.8 49.3 69 42.7M55.8 49.3L69 53.3M47.3 60.3L66 64 55.8 49.3 47.3 60.3" fill="none" stroke="#999" strokeWidth="0.8" />
            <g fill="#7d7d7d"><circle cx="48.7" cy="41.7" r="2.8" /><circle cx="69" cy="53.3" r="2.6" /><circle cx="47.3" cy="60.3" r="2.7" /><circle cx="66" cy="64" r="2.8" /></g>
            <circle cx="69" cy="42.7" r="4" fill="#f0625c" /><circle cx="55.8" cy="49.3" r="5.7" fill="#3b76bd" />
          </svg>
          <span className="ml-[4px] mt-[9px] h-[36px] font-['Montserrat','Inter',sans-serif] text-[29px] font-extrabold leading-[36px] tracking-[-0.06em] text-[#1a1a1a]">HDX</span>
          <span className="ml-[2px] mt-[10px] font-['DejaVu_Sans',sans-serif] text-[11.5px] leading-[16px] text-[#999]">Beta</span>
        </div>
        <div className="flex w-[363px] pt-[16px]">
          <svg className="ml-[7px]" width="20" height="20" viewBox="0 0 20 20" fill="none" stroke="#888" strokeLinecap="round"><circle cx="7.5" cy="7.5" r="6.2" strokeWidth="2.4" /><path d="M12.5 12.5L17.5 17.5" strokeWidth="3.2" /></svg>
          <span className="ml-[17px] text-[16.07px] leading-[24px] text-[#dcdcdc]">eg. IDP Colombia</span>
        </div>
        <div className="mt-[17px] flex h-[20px] w-[217px] items-center justify-between font-['Montserrat','Inter',sans-serif] text-[12.1px] font-semibold leading-[20px] text-[#222]">
          <span>DATA</span><span className="h-[12px] w-px bg-[#222]" /><span>BROWSE</span><span className="h-[12px] w-px bg-[#222]" /><span>CRISES</span>
        </div>
        <span className="ml-[31px] mt-[11px] h-[33px] w-[99px] rounded-[16px] bg-[#888] text-center font-['Montserrat','Inter',sans-serif] text-[11.9px] font-bold leading-[33px] text-white">FEEDBACK</span>
        <div className="ml-auto mt-[6px] flex h-[42px] w-[202px] rounded-[4px] bg-[#f2645a] pl-[30px] text-white">
          <span className="font-['Montserrat','Inter',sans-serif] text-[13.8px] font-bold leading-[40px]">SHARE DATA</span>
          <svg className="ml-[24px] mt-[10px]" width="21" height="22" viewBox="0 0 21 22" fill="none" stroke="#fff" strokeWidth="1.8" strokeLinecap="round"><path d="M19 1.5V11A8.5 8.5 0 0 1 2 11V7.5A5.7 5.7 0 0 1 13.5 7.5V12A3 3 0 0 1 7.5 12V7.5" /></svg>
        </div>
      </div>
      <div className="h-[3px] bg-[#ccc] pl-[221px]"><div className="h-[3px] w-[350px] bg-[#888]" /></div>
      <div className="h-[20px] bg-[#eee] pl-[45px] text-[10.66px] leading-[19px] text-[#444]">HOME / LOCATIONS / <b className="font-bold">COLOMBIA</b></div>
    </header>
  );
}

function Footer() {
  const bar = <span className="ml-[16px] mr-[20px] h-[12px] w-[1.5px] bg-white" />;
  return (
    <footer className="font-['Montserrat','Inter',sans-serif]">
      <div className="flex h-[239px] bg-[#363636] pl-[45px]">
        <div className="w-[820px] pt-[67px]">
          <div className="flex h-[18px] items-center text-[12.6px] font-bold leading-[18px] text-white">
            <span>DATA LICENSES</span>{bar}<span>TERMS OF SERVICE</span>{bar}<span>BLOG</span>{bar}<span>CONTACT</span>{bar}<span>ABOUT</span>
          </div>
          <div className="mt-[7px] text-[10.25px] font-medium leading-[18px] text-[#888]"><span>HUMANITARIAN DATA EXCHANGE BETA</span><span className="ml-[9px]">v0.7.3</span></div>
          <div className="mt-[4px] text-[10px] font-medium leading-[18px] text-[#999]">Subscribe to our mailing list.</div>
          <div className="mt-[1px] flex gap-[23px]">
            <div className="h-[44px] w-[340px] rounded-[3px] bg-white" />
            <div className="mt-[2px] h-[44px] w-[95px] rounded-[3px] border-t border-[#3a9af0] bg-[#007ce0] text-center text-[11.8px] font-bold leading-[42px] text-white">SUBSCRIBE</div>
          </div>
        </div>
        <svg className="mt-[60px]" width="40" height="40" viewBox="0 0 40 40" fill="none" stroke="#fff"><circle cx="20" cy="20" r="18.3" strokeWidth="3.2" /><path d="M18.3 17.2A4.7 4.7 0 1 0 18.3 22.8M29.6 17.2A4.7 4.7 0 1 0 29.6 22.8" strokeWidth="3" /></svg>
        <div className="ml-[40px] mt-[60px] whitespace-nowrap text-[10.4px] font-normal leading-[20px] tracking-[-0.04em] text-white">
          Except where otherwise noted, content on this site is<br />licensed under a <span className="text-[#1a75e8]">Creative Commons Attribution 4.0</span><br />International license.
        </div>
      </div>
      <div className="flex h-[70px] gap-[4px] bg-[#1d1c22] pl-[49px] pt-[20px]">
        {[
          <path key="a" d="M14.5 6.5c1.5-.8 3.3 0 3.7 1.6l1.8.7-1.8.9c.3 4.5-1.5 8.7-5.5 9.3-2 .3-4-.3-5.2-1.3 2.3-.2 3.6-1.2 4.2-3 .7-2-.2-6.6 2.8-8.2z" />,
          <path key="b" d="M7.5 6.5l3 1.4h4l3-1.4.3 4c1.3 3-.3 7-3 8h-4.6c-2.7-1-4.3-5-3-8z" />,
          <text key="c" x="12.5" y="17.5" textAnchor="middle" fontSize="15" fontFamily="Montserrat, Inter, sans-serif">@</text>,
          <g key="d" fill="none" stroke="#fff" strokeWidth="2.2"><circle cx="8.5" cy="17" r="0.8" strokeWidth="1.6" /><path d="M7.5 12a6.5 6.5 0 0 1 6.3 6.5M7.5 8a10.5 10.5 0 0 1 10.3 10.5" /></g>,
        ].map((g, i) => (
          <svg key={i} className="rounded-[3px] bg-[#444]" width="25" height="25" viewBox="0 0 25 25" fill="#fff">{g}</svg>
        ))}
      </div>
    </footer>
  );
}

export default function App() {
  return (
    <div className="relative h-[4658.4px] w-[1259px] overflow-hidden bg-white font-['Noto_Sans_CJK_SC',sans-serif] [zoom:0.87927]">
      <Header />
      <MapPanel />
      <main className="h-[3898px] px-[45px]">
        <div className="flex h-[820px]">
          <div className="pt-[24px]"><Stats /></div>
          <div className="ml-[45px] pt-[22px]"><Charts /></div>
        </div>
        <section className="w-[1170px]">
          <div className="flex h-[50px] items-center border-b border-[#c8c8c8] bg-[#edf5fd] pl-[15px]">
            <h2 className="text-[16.8px] font-bold tracking-[0.034em] text-[#333]">Datasets [43]</h2>
            <span className="ml-[22px] mt-[3px] text-[11.58px] text-[#1173d8]">Show all datasets</span>
          </div>
          {ROWS.map((r) => <DatasetRow key={r.t} r={r} />)}
        </section>
        <div className="mt-[100px] flex h-[45px] w-[1170px] rounded-[3px] bg-[#eee] pl-[536px] text-center font-['Montserrat','Inter',sans-serif] text-[17px] leading-[44px] text-black">
          <span className="w-[45px] bg-[#1ebfb3] text-white">1</span>
          <span className="w-[45px] bg-white">2</span>
          <span className="w-[46px] bg-white">»</span>
        </div>
      </main>
      <Footer />
      <div className="absolute right-[1px] top-[764px] h-[91px] w-[8px] rounded-full border border-[#ddd] bg-white" />
      <div className="absolute right-[1px] top-[1527px] h-[91px] w-[8px] rounded-full border border-[#e4e4e4] bg-white" />
      <div className="absolute right-[1px] top-[2289px] h-[91px] w-[8px] rounded-full border border-[#e4e4e4] bg-white" />
      <div className="absolute right-[1px] top-[3052px] h-[91px] w-[8px] rounded-full border border-[#e4e4e4] bg-white" />
      <div className="absolute right-[1px] top-[3814px] h-[91px] w-[8px] rounded-full border border-[#e4e4e4] bg-white" />
      <div className="absolute right-[1px] top-[4549px] h-[90px] w-[7px] rounded-full bg-[#9a9a9a]" />
    </div>
  );
}
